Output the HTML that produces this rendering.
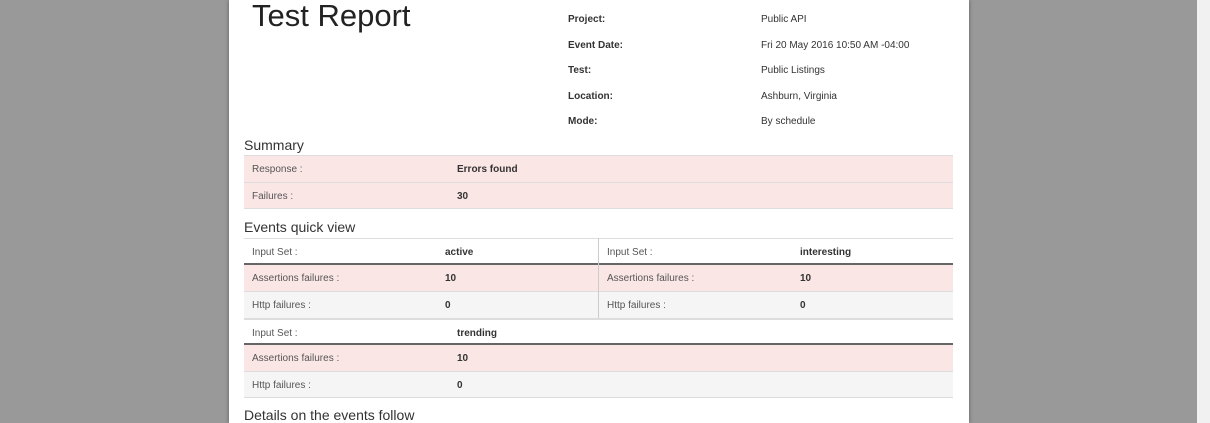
<!DOCTYPE html>
<html><head><style>
body{margin:0;width:1210px;height:423px;overflow:hidden;background:#999;font-family:"Liberation Sans",Arial,sans-serif;color:#333;position:relative}
.page{position:absolute;left:229px;top:0;width:740px;height:423px;background:#fff;box-shadow:0 0 4px rgba(0,0,0,.4)}
.sb{position:absolute;left:1197px;top:0;width:13px;height:423px;background:#f1f1f1}
h1{position:absolute;left:23px;top:-2px;margin:0;font-weight:normal;font-size:31px;color:#222}
.meta{position:absolute;font-size:10px;}
.lbl{font-weight:bold;left:339px}
.val{left:532px}
h3{position:absolute;left:15px;margin:0;font-weight:normal;font-size:14px;color:#333}
.t{position:absolute;font-size:10px}
.row{position:absolute;height:25px;border-top:1px solid #ddd;box-sizing:border-box}
.row span{position:absolute;top:8px}
.pink{background:#fbe6e6}
.grey{background:#f5f5f5}
.k{color:#555}
.v{font-weight:bold}
</style></head><body>
<div class="page">
<h1>Test Report</h1>
<div class="meta lbl" style="top:14px">Project:</div><div class="meta val" style="top:14px">Public API</div>
<div class="meta lbl" style="top:40px">Event Date:</div><div class="meta val" style="top:40px">Fri 20 May 2016 10:50 AM -04:00</div>
<div class="meta lbl" style="top:65px">Test:</div><div class="meta val" style="top:65px">Public Listings</div>
<div class="meta lbl" style="top:91px">Location:</div><div class="meta val" style="top:91px">Ashburn, Virginia</div>
<div class="meta lbl" style="top:116px">Mode:</div><div class="meta val" style="top:116px">By schedule</div>

<h3 style="top:137px">Summary</h3>
<div class="t">
<div class="row pink" style="left:15px;top:155px;width:709px;height:27px"><span class="k" style="left:8px">Response :</span><span class="v" style="left:213px">Errors found</span></div>
<div class="row pink" style="left:15px;top:182px;width:709px;height:27px;border-bottom:1px solid #ddd"><span class="k" style="left:8px">Failures :</span><span class="v" style="left:213px">30</span></div>
</div>

<h3 style="top:219px">Events quick view</h3>
<div class="t">
<div class="row" style="left:15px;top:238px;width:354px;height:27px;border-bottom:2px solid #666"><span class="k" style="left:8px">Input Set :</span><span class="v" style="left:201px">active</span></div>
<div class="row pink" style="left:15px;top:265px;width:354px;height:26px;border-top:none"><span class="k" style="left:8px">Assertions failures :</span><span class="v" style="left:201px">10</span></div>
<div class="row grey" style="left:15px;top:291px;width:354px;height:27px"><span class="k" style="left:8px">Http failures :</span><span class="v" style="left:201px">0</span></div>
<div style="position:absolute;left:369px;top:238px;width:1px;height:80px;background:#ccc"></div>
<div class="row" style="left:370px;top:238px;width:354px;height:27px;border-bottom:2px solid #666"><span class="k" style="left:8px">Input Set :</span><span class="v" style="left:201px">interesting</span></div>
<div class="row pink" style="left:370px;top:265px;width:354px;height:26px;border-top:none"><span class="k" style="left:8px">Assertions failures :</span><span class="v" style="left:201px">10</span></div>
<div class="row grey" style="left:370px;top:291px;width:354px;height:27px"><span class="k" style="left:8px">Http failures :</span><span class="v" style="left:201px">0</span></div>

<div class="row" style="left:15px;top:318px;width:709px;height:27px;border-top:2px solid #ddd;border-bottom:2px solid #666"><span class="k" style="left:8px">Input Set :</span><span class="v" style="left:213px">trending</span></div>
<div class="row pink" style="left:15px;top:345px;width:709px;height:26px;border-top:none"><span class="k" style="left:8px">Assertions failures :</span><span class="v" style="left:213px">10</span></div>
<div class="row grey" style="left:15px;top:371px;width:709px;height:27px;border-bottom:1px solid #ddd"><span class="k" style="left:8px">Http failures :</span><span class="v" style="left:213px">0</span></div>
</div>
<h3 style="top:407px">Details on the events follow</h3>
</div>
<div class="sb"></div>
</body></html>
